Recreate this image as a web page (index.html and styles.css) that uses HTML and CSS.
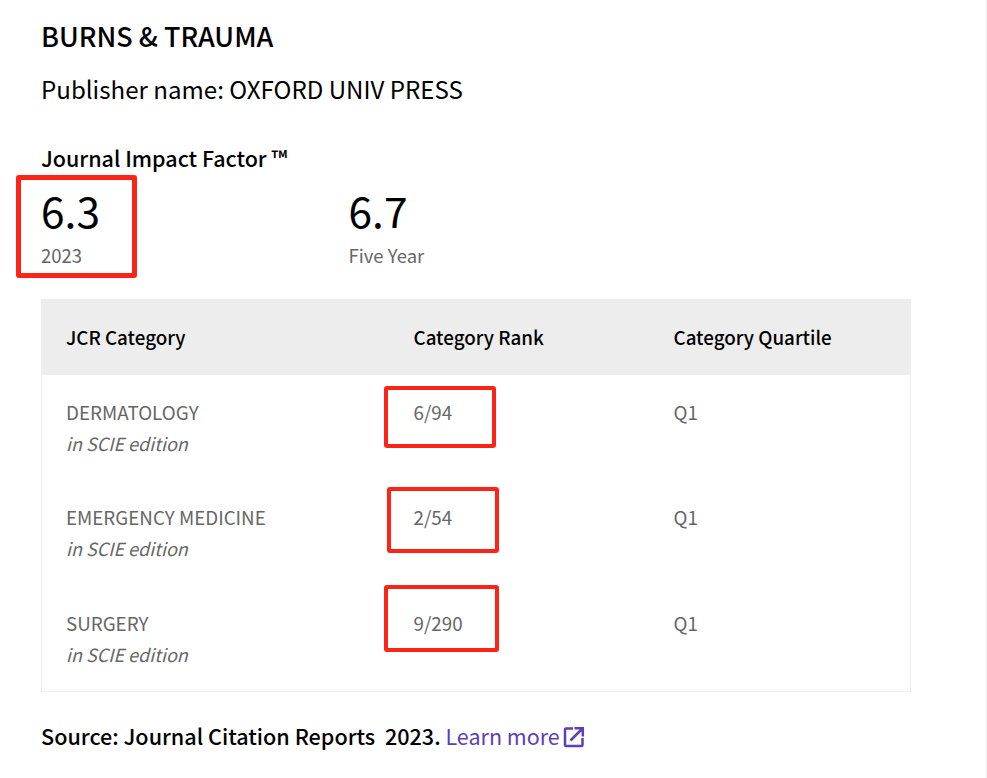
FILE: index.html
```html
<!DOCTYPE html>
<html lang="en">
<head>
<meta charset="utf-8">
<title>Burns &amp; Trauma</title>
<link rel="stylesheet" href="styles.css">
</head>
<body>
<main class="page">
  <h1 class="title">BURNS &amp; TRAUMA</h1>
  <p class="publisher">Publisher name: OXFORD UNIV PRESS</p>
  <h2 class="jif-title">Journal Impact Factor ™</h2>
  <div class="metrics">
    <div class="metric metric-first"><div class="metric-value">6.3</div><div class="metric-label">2023</div></div>
    <div class="metric"><div class="metric-value">6.7</div><div class="metric-label">Five Year</div></div>
  </div>
  <table class="jcr">
    <thead>
      <tr><th class="c1">JCR Category</th><th class="c2">Category Rank</th><th class="c3">Category Quartile</th></tr>
    </thead>
    <tbody>
      <tr><td class="c1">DERMATOLOGY<br><em>in SCIE edition</em></td><td>6/94</td><td>Q1</td></tr>
      <tr><td class="c1">EMERGENCY MEDICINE<br><em>in SCIE edition</em></td><td>2/54</td><td>Q1</td></tr>
      <tr><td class="c1">SURGERY<br><em>in SCIE edition</em></td><td>9/290</td><td>Q1</td></tr>
    </tbody>
  </table>
  <p class="source"><strong>Source: Journal Citation Reports&nbsp; 2023.</strong> <a class="learn" href="#">Learn more<svg class="ext" viewBox="0 0 22 22" width="22" height="22" aria-hidden="true"><path d="M10 2.500H3a1 1 0 0 0-1 1V19a1 1 0 0 0 1 1h15.500a1 1 0 0 0 1-1v-7" fill="none" stroke="#5e3fb5" stroke-width="2.500"/><path d="M7.500 14.500 19 3M11.500 2.200H19.800V10.500" fill="none" stroke="#5e3fb5" stroke-width="2.500"/></svg></a></p>
  <div class="mark mark-jif"></div>
  <div class="mark mark-r1"></div>
  <div class="mark mark-r2"></div>
  <div class="mark mark-r3"></div>
</main>
</body>
</html>
```

FILE: styles.css
```css
* { box-sizing: border-box; }
html, body { margin: 0; padding: 0; background: #fff; }
body {
  height: 778px;
  overflow: hidden;
  color: #000;
  font-family: "Noto Sans CJK SC", "Noto Sans", sans-serif;
  border-right: 1px solid #eee;
}
.page { position: relative; padding: 17px 0 0 41px; width: 911px; }
.title { margin: 0; font-size: 27px; line-height: 38px; font-weight: 500; }
.publisher { margin: 15px 0 0; font-size: 24.100px; line-height: 38px; font-weight: 400; }
.jif-title { margin: 34px 0 0; font-size: 21.500px; line-height: 32px; font-weight: 500; }
.metrics { display: flex; margin-top: 8px; }
.metric { width: 307.500px; }
.metric-value { font-size: 42.500px; line-height: 56px; }
.metric-label { font-size: 18.500px; line-height: 28px; color: #666; margin-top: 3px; }
.jcr {
  width: 870px;
  margin-top: 30px;
  border-collapse: collapse;
  border: 1px solid #eee;
  table-layout: fixed;
  font-size: 18.800px;
}
.jcr th {
  height: 75px;
  padding: 0 0 2px 25px;
  background: #ededed;
  text-align: left;
  font-weight: 500;
  font-size: 18.800px;
}
.jcr .c1 { width: 347px; padding-left: 24px; }
.c2 { width: 260px; }
.jcr td {
  height: 105.500px;
  padding: 21px 0 0 25px;
  vertical-align: top;
  color: #666;
  line-height: 31px;
}
.jcr em { font-style: italic; font-size: 18px; }
.source { margin: 27px 0 0; font-size: 21.600px; line-height: 34px; }
.source strong { font-weight: 500; }
.learn { color: #5e3fb5; text-decoration: none; font-size: 21.500px; }
.ext { vertical-align: -3px; margin-left: 3px; }
.mark { position: absolute; border: 4px solid #fb2416; border-radius: 3px; }
.mark-jif { left: 16px; top: 175px; width: 121px; height: 103px; border-width: 5px; }
.mark-r1 { left: 384px; top: 386px; width: 112px; height: 62px; }
.mark-r2 { left: 387px; top: 487px; width: 112px; height: 66px; }
.mark-r3 { left: 384px; top: 585px; width: 115px; height: 67px; }
```
